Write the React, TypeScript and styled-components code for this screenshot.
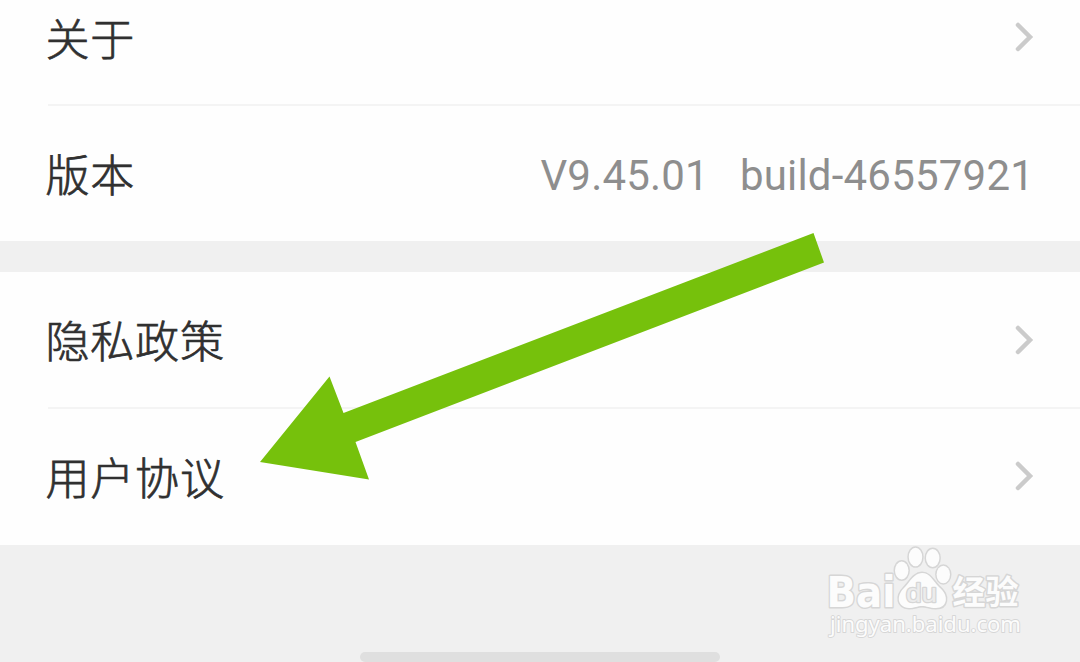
import React from 'react';
import styled, { createGlobalStyle } from 'styled-components';

const GlobalStyle = createGlobalStyle`
  * {
    box-sizing: border-box;
  }
  body {
    margin: 0;
    overflow: hidden;
    background-color: #f0f0f0;
    font-family: Roboto, "Noto Sans CJK SC", sans-serif;
  }
`;
const Page = styled.main`
  position: relative;
  display: flex;
  flex-direction: column;
  height: 662px;
  overflow: hidden;
  background-color: #f0f0f0;
`;
const Group = styled.section`
  display: flex;
  flex-direction: column;
  background-color: #fefefe;
  margin-bottom: 31px;
`;
const Row = styled.div<{ $height: number; $divider?: boolean; $lift?: number }>`
  display: flex;
  align-items: center;
  justify-content: space-between;
  height: ${({ $height }) => $height}px;
  margin-left: 48px;
  padding-right: 46px;
  padding-bottom: ${({ $lift }) => $lift || 0}px;
  border-bottom: ${({ $divider }) => ($divider ? '2px solid #f4f4f4' : 'none')};
`;
const Label = styled.span`
  margin-left: -2.5px;
  padding-bottom: 1px;
  color: #303030;
  font-family: "Noto Sans CJK SC", sans-serif;
  font-size: 44px;
  font-weight: 300;
  line-height: 60px;
  letter-spacing: 0.8px;
  -webkit-text-stroke: 0.7px #303030;
`;
const Version = styled.span`
  display: flex;
  gap: 31px;
  padding-top: 5px;
  color: #8e8e8e;
  font-size: 42px;
  line-height: 60px;
  letter-spacing: 0.2px;
`;
const Chevron = styled.svg`
  width: 20px;
  height: 32px;
  fill: none;
  stroke: #cbcbcb;
  stroke-width: 4.5;
  stroke-linecap: round;
`;
const Footer = styled.footer`
  display: flex;
  flex: 1;
  flex-direction: column;
  align-items: center;
  justify-content: flex-end;
  margin-top: -31px;
`;
const HomeBar = styled.div`
  width: 360px;
  height: 10px;
  border-radius: 5px;
  background-color: #dfdfdf;
`;
const Arrow = styled.svg`
  position: absolute;
  left: 0;
  top: 0;
  width: 1080px;
  height: 662px;
  pointer-events: none;
`;
const Watermark = styled.svg`
  position: absolute;
  left: 820px;
  top: 540px;
  width: 210px;
  height: 104px;
  fill: #fcfcfc;
  stroke: #d6d6d6;
  paint-order: stroke;
  stroke-linejoin: round;
`;

const Next: React.FC = () => (
  <Chevron viewBox="0 0 20 32">
    <path d="M4 4 L16 16 L4 28" />
  </Chevron>
);

const Logo: React.FC = () => (
  <Watermark viewBox="0 0 210 104">
    <g strokeWidth="3">
      <text x="6.500" y="66.500" fontFamily="DejaVu Sans" fontWeight="700" fontSize="43" textLength="69" lengthAdjust="spacingAndGlyphs">Bai</text>
      <text x="132.500" y="63.500" fontFamily="Noto Sans CJK SC" fontWeight="700" fontSize="33" textLength="66" lengthAdjust="spacingAndGlyphs">经验</text>
      <ellipse cx="81.700" cy="30.500" rx="6.700" ry="9" />
      <ellipse cx="95.500" cy="17" rx="6.700" ry="9.300" />
      <ellipse cx="112.700" cy="18" rx="6.700" ry="9" />
      <ellipse cx="123.300" cy="34.500" rx="6.700" ry="8.700" />
      <path d="M102 33 C110 33 113 41 119 47 C130 56 127 68 116 68 C109 68 107 66 102 66 C97 66 95 68 89 68 C77 67 76 56 84 48 C90 42 94 33 102 33 Z" />
    </g>
    <text x="86" y="61.500" fontFamily="Liberation Sans" fontSize="26" strokeWidth="2.500" fill="#ececec" textLength="31" lengthAdjust="spacingAndGlyphs">du</text>
    <text x="10" y="92" fontFamily="Noto Sans" fontSize="21" strokeWidth="1.800" textLength="191" lengthAdjust="spacingAndGlyphs">jingyan.baidu.com</text>
  </Watermark>
);

const App: React.FC = () => {
  return (
    <>
      <GlobalStyle />
      <Page>
        <Group>
          <Row $height={106} $divider $lift={30}>
            <Label>关于</Label>
            <Next />
          </Row>
          <Row $height={135}>
            <Label>版本</Label>
            <Version>
              <span>V9.45.01</span>
              <span>build-46557921</span>
            </Version>
          </Row>
        </Group>
        <Group>
          <Row $height={137} $divider>
            <Label>隐私政策</Label>
            <Next />
          </Row>
          <Row $height={136} $lift={2}>
            <Label>用户协议</Label>
            <Next />
          </Row>
        </Group>
        <Footer>
          <HomeBar />
        </Footer>
        <Arrow viewBox="0 0 1080 662">
          <path d="M260 462 L329.500 376.500 L343.500 413 L813.500 233 L824 262.500 L355.500 442 L369 479.500 Z" fill="#76c10c" />
        </Arrow>
        <Logo />
      </Page>
    </>
  );
};

export default App;
